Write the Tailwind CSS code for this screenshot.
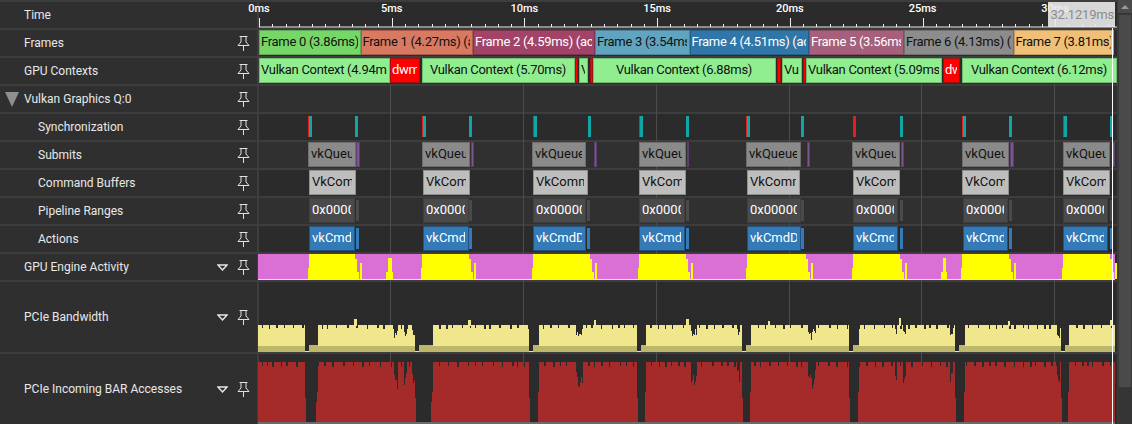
<!DOCTYPE html>
<html lang="en">
<head>
  <meta charset="UTF-8" />
  <title>GPU Timeline</title>
  <script src="https://cdn.jsdelivr.net/npm/@tailwindcss/browser@4"></script>
</head>
<body class="bg-[#2b2b2b]">
  <div class="relative flex h-[424px] w-[1132px] overflow-hidden bg-[#3d3d3d] font-['Roboto',sans-serif]">
    <!-- timeline rows -->
    <div id="rows" class="flex w-[1117px] flex-col gap-[2px] pt-[2px]"></div>

    <!-- scrollbar -->
    <div class="ml-px flex w-[14px] flex-col bg-[#353535]">
      <div class="flex h-[13px] items-center justify-center bg-[#4a4a4a]">
        <div class="h-0 w-0 border-x-[4px] border-b-[4px] border-x-transparent border-b-[#999]"></div>
      </div>
      <div class="mt-px h-[374px] border border-[#383838] bg-[#4a4a4a]"></div>
    </div>

    <!-- current time tooltip and cursor, they sit over the rows -->
    <div class="absolute left-[1048px] top-[2px] flex h-[25px] w-[67px] items-center justify-end bg-[#eaeaea]/90 pr-px text-[13px] tracking-[-0.2px] text-[#8c8c8c]">32.1219ms</div>
    <div class="absolute bottom-0 left-[1112px] top-[28px] w-px bg-white"></div>
  </div>

  <script>
    const X0 = 259;
    const grid = [390, 523, 656, 789, 921, 1054];

    const greenCtx = "border-[#6fbf6f] bg-[#90ee90] text-[#111]";
    const redCtx = "border-[#a01010] bg-[#ff0000] text-white";
    const gray = "border-[#6e6e6e] bg-[#8a8a8a] text-[#111]";
    const purple = "border-[#5c3f6e] bg-[#7d5590] text-white";
    const silver = "border-[#909090] bg-[#bebebe] text-[#111]";
    const pipe = "border-[#3f3f3f] bg-[#4a4a4a] text-white";
    const blue = "border-[#24527f] bg-[#337ab7] text-white";

    const frames = [
      [259, 360.5, "Frame 0 (3.86ms)", "border-[#5fa856] bg-[#76d768] text-[#111]"],
      [360.5, 473, "Frame 1 (4.27ms) (acquired)", "border-[#a85d4a] bg-[#d87a62] text-[#111]"],
      [473, 595, "Frame 2 (4.59ms) (acquired)", "border-[#7c3350] bg-[#a14468] text-white"],
      [595, 689.5, "Frame 3 (3.54ms)", "border-[#4c8399] bg-[#60a4bf] text-[#111]"],
      [689.5, 809, "Frame 4 (4.51ms) (acquired)", "border-[#265e86] bg-[#3176a8] text-white"],
      [809, 904, "Frame 5 (3.56ms)", "border-[#854c63] bg-[#a6607c] text-white"],
      [904, 1013.5, "Frame 6 (4.13ms) (acquired)", "border-[#707070] bg-[#8c8c8c] text-[#111]"],
      [1013.5, 1114, "Frame 7 (3.81ms)", "border-[#c09a60] bg-[#f0c078] text-[#111]"],
    ];
    const contexts = [
      [259, 390, "Vulkan Context (4.94ms)", greenCtx],
      [390, 420, "dwm", redCtx],
      [422, 575, "Vulkan Context (5.70ms)", greenCtx, true],
      [575, 578, "", redCtx],
      [579, 588, "Vulkan", greenCtx],
      [590, 593, "", redCtx],
      [593, 776, "Vulkan Context (6.88ms)", greenCtx, true],
      [777, 781, "", redCtx],
      [782, 802, "Vulkan", greenCtx],
      [803, 806, "", redCtx],
      [806, 942, "Vulkan Context (5.09ms)", greenCtx],
      [943, 960, "dwm", redCtx],
      [962, 1117, "Vulkan Context (6.12ms)", greenCtx, true],
    ];
    const submits = [
      [308, 355.5, "vkQueueSubmit", gray], [356, 360, "", purple],
      [422, 470, "vkQueueSubmit", gray], [470.5, 474, "", purple],
      [532, 586, "vkQueueSubmit", gray], [594, 597, "", purple],
      [639, 686, "vkQueueSubmit", gray], [686.5, 689, "", purple],
      [746, 801, "vkQueueSubmit", gray], [807, 810, "", purple],
      [852, 900, "vkQueueSubmit", gray], [900.5, 904, "", purple],
      [962, 1009, "vkQueueSubmit", gray], [1010, 1014, "", purple],
      [1063, 1110, "vkQueueSubmit", gray], [1112, 1115, "", purple],
    ];
    const buffers = [
      [309, 356], [423, 470], [533, 588], [639, 686], [747, 800], [853, 900], [962, 1009], [1063, 1110],
    ].map(([a, b]) => [a, b, "VkCommandBuffer", silver]);

    // Pipeline ranges and actions share their spans
    const spans = [
      [309, 355, 355.5, 358.5], [423, 468.5, 469, 472], [533, 586, 587, 590], [639, 684.5, 686, 689],
      [747, 800.5, 801, 804], [853, 898, 900, 903], [963, 1008, 1009, 1012], [1063, 1108, 1110, 1113],
    ];
    const ranges = spans.map(([a, b]) => [a, b, "0x00000000", pipe]);
    const actions = spans.map(([a, b]) => [a, b, "vkCmdDraw", blue]);

    const sync = [
      [308, "r"], [309, "t"], [355, "t"], [422, "r"], [423, "t"], [469, "t"], [533, "r"], [534, "t"], [588, "t"],
      [639, "r"], [640, "t"], [686, "t"], [746, "r"], [747, "t"], [801, "t"], [853, "R"], [900, "t"],
      [962, "r"], [963, "t"], [1009, "t"], [1063, "r"], [1064, "t"], [1110, "t"],
    ];

    const pin = `<svg class="absolute left-[237px] top-1/2 -mt-[7px]" width="13" height="15" viewBox="0 0 13 15" fill="none" stroke="#e0e0e0"><path d="M2.5 .5h8M4 .5V6L1 9.5h11L9 6V.5M6.5 9.5V15"/></svg>`;
    const caret = `<svg class="absolute left-[217px] top-1/2 -mt-[3px]" width="11" height="7" viewBox="0 0 11 7" fill="#2e2e2e" stroke="#e6e6e6" stroke-width="1.4"><path d="M1 1h9L5.5 6z"/></svg>`;
    const arrow = `<svg width="14" height="15" viewBox="0 0 14 15" class="ml-[5px]"><path d="M0 0h14L7 15z" fill="#8f8f8f"/></svg>`;

    function bar([a, b, text, colors, centered]) {
      const align = centered ? "text-center" : "";
      return `<div class="absolute top-0 h-[25px] overflow-hidden border ${colors}" style="left:${a - X0}px;width:${b - a}px">
        <div class="ml-px mr-[2px] overflow-hidden whitespace-nowrap text-[13px] leading-[22px] tracking-[-0.3px] ${align}">${text}</div></div>`;
    }
    const bars = (list) => list.map(bar).join("");
    // API call boxes sit a little further in from their edges than the frames
    const callBars = (list) => list.map(([a, b, text, colors]) =>
      `<div class="absolute top-0 h-[25px] overflow-hidden border ${colors}" style="left:${a - X0}px;width:${b - a}px">
        <div class="ml-[2px] mr-[3px] overflow-hidden whitespace-nowrap text-[13px] leading-[22px]">${text}</div></div>`).join("");
    // the short slivers that follow each range or action
    const slivers = (color) => spans.map(([, , c, d]) =>
      `<div class="absolute top-[2px] h-[21px] ${color}" style="left:${c - X0}px;width:${d - c}px"></div>`).join("");
    const syncMarks = sync.map(([x, c]) => {
      const color = c === "t" ? "w-[3px] bg-[#12a5a5]" : c === "R" ? "w-[3px] bg-[#e21f1f]" : "w-[2px] bg-[#e21f1f]";
      return `<div class="absolute top-[2px] h-[21px] ${color}" style="left:${x - X0}px"></div>`;
    }).join("");

    // Small repeatable noise so the charts come out the same every time
    let seed = 11;
    const rnd = () => (seed = (seed * 16807) % 2147483647) / 2147483647;
    const rect = (x, y, w, h, fill) => `<rect x="${x}" y="${y}" width="${w}" height="${h}" fill="${fill}"/>`;

    const gaps = [[305, 318], [415, 433], [529, 539], [637, 646], [742, 751], [849, 859], [955, 965], [1061, 1069]];
    const inGap = (x) => gaps.find(([a, b]) => x >= a && x < b);
    const dips = [[394, 398], [404, 407], [412, 415], [576, 583], [691, 697], [737, 740], [808, 816], [895, 897], [903, 906], [950, 953], [1057, 1060]];
    const inDip = (x) => dips.some(([a, b]) => x >= a && x < b);

    // top edge of a filled chart: flat with a narrow notch every 5-11px
    function notches(from, to, depth) {
      const tops = {};
      let next = from + 4, left = 0, drop = 0;
      for (let x = from; x < to; x++) {
        if (x >= next) {
          left = 1 + Math.floor(rnd() * 2);
          drop = depth + Math.floor(rnd() * 2);
          next = x + 5 + Math.floor(rnd() * 7);
        }
        tops[x] = left > 0 ? drop : 0;
        left--;
      }
      return tops;
    }

    function engineChart() {
      let s = rect(258, 254, 857, 25, "#da70d6") + rect(258, 279, 857, 1, "#ffff00");
      [[309, 355], [422, 469], [533, 590], [639, 686], [747, 806], [853, 900], [962, 1009], [1063, 1110]].forEach(([a, b]) => {
        s += rect(a, 254, b - a, 25, "#ffff00") + rect(a - 1, 268, 1, 11, "#ffff00");
        s += rect(b, 259, 2, 20, "#ffff00") + rect(b + 2, 272, 2, 7, "#ffff00") + rect(b + 5, 263, 2, 16, "#ffff00");
      });
      s += rect(386, 272, 7, 7, "#ffff00") + rect(388, 258, 4, 14, "#ffff00");
      s += rect(941, 272, 6, 7, "#ffff00") + rect(943, 258, 3, 14, "#ffff00");
      s += rect(258, 254, 1, 22, "#da70d6");
      return `<svg class="absolute -left-px top-0 overflow-visible" width="858" height="26" viewBox="258 254 858 26" shape-rendering="crispEdges">${s}</svg>`;
    }

    function bandwidthChart() {
      let s = "";
      const tops = notches(258, 1115, 3);
      for (let x = 258; x < 1115; x++) {
        if (inGap(x)) continue;
        let top = 325 + tops[x];
        if (inDip(x)) top += 4 + Math.floor(rnd() * 8);
        s += rect(x, top, 1, 346 - top, "#f0e68c");
      }
      [[354, 3, 319], [468, 3, 320], [594, 2, 320], [686, 3, 319], [768, 2, 321], [899, 2, 318], [1008, 2, 321], [1110, 3, 320]].forEach(([x, w, y]) => {
        s += rect(x, y, w, 326 - y, "#f0e68c");
      });
      s += rect(258, 346, 857, 6, "#bdb76b");
      gaps.forEach(([a, b]) => {
        s += rect(a, 346, 4, 5, "#2b2b2b") + rect(a, 351, 4, 1, "#f0e68c");
        s += rect(a + 4, 345, b - a - 4, 1, "#bdb76b");
      });
      return `<svg class="absolute -left-px top-0" width="858" height="70" viewBox="258 282 858 70" shape-rendering="crispEdges">${s}</svg>`;
    }

    function barChart() {
      let s = "";
      const tops = notches(258, 1115, 4);
      for (let x = 258; x < 1115; x++) {
        const gap = inGap(x);
        let top = 362;
        if (gap) {
          if (x === gap[0]) top = 398;
          else if (x === gap[1] - 1) top = 392;
          else if (x === gap[1] - 2 && gap[1] - gap[0] > 12) top = 402;
          else continue;
        } else {
          top += tops[x];
          if (inDip(x)) top += 8 + Math.floor(rnd() * 18);
        }
        s += rect(x, top, 1, 422 - top, "#a52a2a");
      }
      s += rect(258, 422, 857, 2, "#6b6b6b");
      return `<svg class="absolute -left-px top-0" width="858" height="70" viewBox="258 354 858 70" shape-rendering="crispEdges">${s}</svg>`;
    }

    function timeRuler() {
      let s = `<line x1="0" x2="858" y1="25" y2="25" stroke="#eee"/>`;
      for (let i = 0; i <= 64; i++) {
        const x = Math.round(i * 13.27) + 0.5;
        s += `<line x1="${x}" x2="${x}" y1="${i % 10 === 0 ? 16 : 22}" y2="25" stroke="#eee"/>`;
      }
      let labels = "";
      ["0ms", "5ms", "10ms", "15ms", "20ms", "25ms", "30ms"].forEach((t, i) => {
        labels += `<div class="absolute top-0 w-[40px] -translate-x-1/2 text-center text-[11px] font-medium leading-[14px] text-white" style="left:${i * 132.7}px">${t}</div>`;
      });
      return `<svg class="absolute left-0 top-0" width="858" height="26">${s}</svg>${labels}`;
    }

    const rows = [
      { name: "Time", height: 26, nopin: true, bg: "bg-[#2b2b2b]", track: timeRuler() },
      { name: "Frames", height: 26, track: bars(frames) },
      { name: "GPU Contexts", height: 26, track: bars(contexts) },
      { name: "Vulkan Graphics Q:0", height: 26, open: true, lines: true, bg: "bg-[#303030]" },
      { name: "Synchronization", height: 26, sub: true, lines: true, track: syncMarks },
      { name: "Submits", height: 26, sub: true, lines: true, bg: "bg-[#303030]", track: callBars(submits) },
      { name: "Command Buffers", height: 26, sub: true, lines: true, track: callBars(buffers) },
      { name: "Pipeline Ranges", height: 26, sub: true, lines: true, bg: "bg-[#303030]", track: callBars(ranges) + slivers("bg-[#4a4a4a]") },
      { name: "Actions", height: 26, sub: true, lines: true, track: callBars(actions) + slivers("bg-[#337ab7]") },
      { name: "GPU Engine Activity", height: 26, caret: true, track: engineChart() },
      { name: "PCIe Bandwidth", height: 70, caret: true, lines: true, track: bandwidthChart() },
      { name: "PCIe Incoming BAR Accesses", height: 70, caret: true, lines: true, track: barChart() },
    ];

    document.getElementById("rows").innerHTML = rows.map((r) => {
      const lines = r.lines ? grid.map((x) => `<div class="absolute -bottom-[2px] -top-[2px] w-px bg-[#4c4c4c]" style="left:${x - X0}px"></div>`).join("") : "";
      return `<div class="flex gap-[2px]" style="height:${r.height}px">
        <div class="relative flex w-[257px] items-center bg-[#2f2f2f] text-[12px] text-[#e8e8e8]">
          <div class="flex ${r.sub ? "w-[38px]" : "w-[24px]"} shrink-0 items-center">${r.open ? arrow : ""}</div>
          <span>${r.name}</span>
          ${r.caret ? caret : ""}${r.nopin ? "" : pin}
        </div>
        <div class="relative flex-1 ${r.bg || "bg-[#2b2b2b]"}">${lines}${r.track || ""}</div>
      </div>`;
    }).join("");
  </script>
</body>
</html>
